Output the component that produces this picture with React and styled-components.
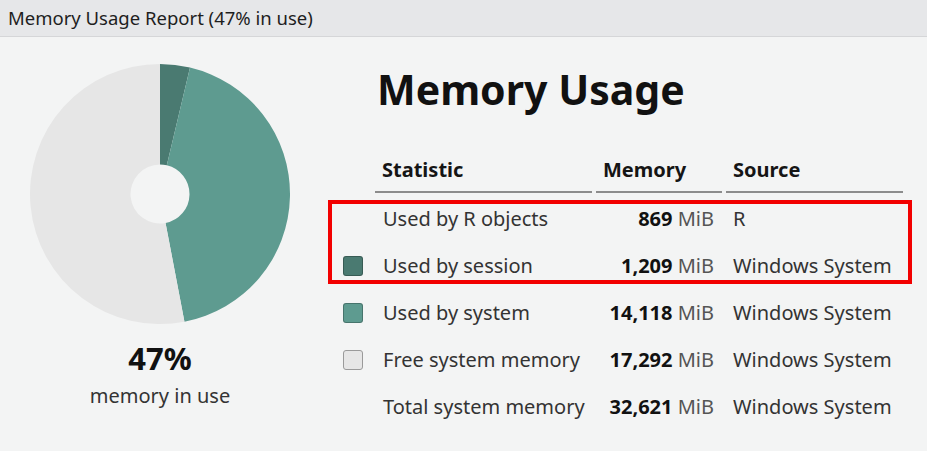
import React from "react";
import styled, { createGlobalStyle } from "styled-components";

const slices = [
  { value: 1209, color: "#4a7a71" },
  { value: 14118, color: "#5e9b90" },
  { value: 17292, color: "#e6e6e6" },
];

const rows = [
  { label: "Used by R objects", value: "869", source: "R" },
  { label: "Used by session", value: "1,209", source: "Windows System", swatch: "session" },
  { label: "Used by system", value: "14,118", source: "Windows System", swatch: "system" },
  { label: "Free system memory", value: "17,292", source: "Windows System", swatch: "free" },
  { label: "Total system memory", value: "32,621", source: "Windows System" },
];

function arcPath(cx, cy, R, r, a0, a1) {
  const pt = (rad, a) => [cx + rad * Math.sin(a), cy - rad * Math.cos(a)];
  const large = a1 - a0 > Math.PI ? 1 : 0;
  const [x0, y0] = pt(R, a0);
  const [x1, y1] = pt(R, a1);
  const [x2, y2] = pt(r, a1);
  const [x3, y3] = pt(r, a0);
  return `M${x0} ${y0} A${R} ${R} 0 ${large} 1 ${x1} ${y1} L${x2} ${y2} A${r} ${r} 0 ${large} 0 ${x3} ${y3} Z`;
}

function Donut() {
  const total = slices.reduce((s, d) => s + d.value, 0);
  let acc = 0;
  return (
    <svg width="260" height="260" viewBox="0 0 260 260">
      {slices.map((s, i) => {
        const a0 = (acc / total) * Math.PI * 2;
        acc += s.value;
        const a1 = (acc / total) * Math.PI * 2;
        return <path key={i} d={arcPath(130, 130, 130, 29.5, a0, a1)} fill={s.color} />;
      })}
    </svg>
  );
}

function Row({ row }) {
  return (
    <TableRow>
      <SwatchCell>{row.swatch && <Swatch $kind={row.swatch} />}</SwatchCell>
      <StatCell>{row.label}</StatCell>
      <MemCell>
        <b>{row.value}</b> MiB
      </MemCell>
      <SourceCell>{row.source}</SourceCell>
    </TableRow>
  );
}

export default function App() {
  return (
    <Window>
      <GlobalStyle />
      <TitleBar>Memory Usage Report (47% in use)</TitleBar>
      <Body>
        <ChartPanel>
          <Donut />
          <Percent>47%</Percent>
          <Caption>memory in use</Caption>
        </ChartPanel>
        <StatsPanel>
          <Heading>Memory Usage</Heading>
          <Table>
            <HeaderRow>
              <span />
              <HeadCell>Statistic</HeadCell>
              <HeadCell>Memory</HeadCell>
              <HeadCell>Source</HeadCell>
            </HeaderRow>
            <Highlight>
              <Row row={rows[0]} />
              <Row row={rows[1]} />
            </Highlight>
            {rows.slice(2).map((r) => (
              <Row key={r.label} row={r} />
            ))}
          </Table>
        </StatsPanel>
      </Body>
    </Window>
  );
}

const GlobalStyle = createGlobalStyle`
  html, body {
    margin: 0;
    padding: 0;
    background: #f3f4f4;
  }
  body {
    font-family: "Noto Sans", "Liberation Sans", sans-serif;
  }
`;

const Window = styled.div`
  width: 927px;
  height: 451px;
  display: flex;
  flex-direction: column;
  background: #f3f4f4;
  overflow: hidden;
`;

const TitleBar = styled.div`
  height: 37px;
  box-sizing: border-box;
  display: flex;
  align-items: center;
  padding: 0 8px 2px;
  background: #e6e7e9;
  border-bottom: 1px solid #d5d6d8;
  font-size: 18.5px;
  color: #1e1e1e;
`;

const Body = styled.div`
  flex: 1;
  display: flex;
`;

const ChartPanel = styled.div`
  width: 320px;
  display: flex;
  flex-direction: column;
  align-items: center;
  padding-top: 27px;
  box-sizing: border-box;
`;

const Percent = styled.div`
  margin-top: 14px;
  font-size: 31px;
  line-height: 40px;
  font-weight: 700;
  color: #111;
`;

const Caption = styled.div`
  margin-top: 4px;
  font-size: 20px;
  line-height: 28px;
  color: #333;
`;

const StatsPanel = styled.div`
  flex: 1;
  padding: 28px 0 0 13px;
  display: flex;
  flex-direction: column;
`;

const Heading = styled.h1`
  margin: 0 0 37px 44px;
  font-size: 41px;
  line-height: 48px;
  font-weight: 700;
  color: #111;
`;

const Table = styled.div`
  display: flex;
  flex-direction: column;
  width: 570px;
`;

const gridCols = `
  display: grid;
  grid-template-columns: 38px 217px 126px 177px;
  column-gap: 4px;
`;

const HeaderRow = styled.div`
  ${gridCols}
  height: 43px;
  margin-bottom: 2px;
`;

const HeadCell = styled.div`
  display: flex;
  align-items: center;
  padding: 0 0 2px 7px;
  border-bottom: 2px solid #8c8c8c;
  font-size: 20px;
  font-weight: 700;
  color: #151515;
`;

const Highlight = styled.div`
  position: relative;

  &::after {
    content: "";
    position: absolute;
    top: 5px;
    bottom: 5px;
    left: -5px;
    right: -9px;
    border: 4px solid #f20000;
    pointer-events: none;
  }
`;

const TableRow = styled.div`
  ${gridCols}
  height: 47px;
  align-items: center;
  font-size: 20px;
  color: #333;
`;

const SwatchCell = styled.div`
  display: flex;
  align-items: center;
  padding-left: 10px;
`;

const swatchColors = {
  session: "#4a7a71",
  system: "#5e9b90",
  free: "#e6e6e6",
};

const Swatch = styled.span`
  width: 20px;
  height: 20px;
  box-sizing: border-box;
  border-radius: 3px;
  border: 1px solid ${(p) => (p.$kind === "free" ? "#9a9a9a" : "rgba(0,0,0,0.25)")};
  background: ${(p) => swatchColors[p.$kind]};
`;

const StatCell = styled.div`
  padding-left: 8px;
  white-space: nowrap;
`;

const MemCell = styled.div`
  text-align: right;
  padding-right: 8px;
  white-space: nowrap;
  color: #555;

  b {
    font-weight: 700;
    color: #111;
  }
`;

const SourceCell = styled.div`
  padding-left: 7px;
  white-space: nowrap;
`;
